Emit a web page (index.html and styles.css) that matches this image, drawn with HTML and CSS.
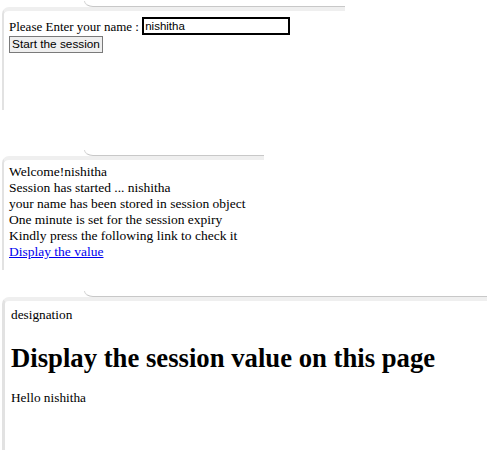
FILE: index.html
```html
<!DOCTYPE html>
<html>
<head>
<meta charset="utf-8">
<link rel="stylesheet" href="styles.css">
</head>
<body>
<div class="page">
  <div class="shot s1">
    <div class="tab"></div>
    <div class="frame f1">
      <div class="row">Please Enter your name : <input class="name" type="text" value="nishitha"></div>
      <button class="btn">Start the session</button>
    </div>
  </div>
  <div class="shot s2">
    <div class="tab"></div>
    <div class="frame f2">
      <div class="line">Welcome!nishitha</div>
      <div class="line">Session has started ... nishitha</div>
      <div class="line">your name has been stored in session object</div>
      <div class="line">One minute is set for the session expiry</div>
      <div class="line">Kindly press the following link to check it</div>
      <div class="line"><a href="#" class="link">Display the value</a></div>
    </div>
  </div>
  <div class="shot s3">
    <div class="tab"></div>
    <div class="frame f3">
      <div class="line">designation</div>
      <h1 class="title">Display the session value on this page</h1>
      <div class="line hello">Hello nishitha</div>
    </div>
  </div>
</div>
</body>
</html>
```

FILE: styles.css
```css
html, body {
  margin: 0;
  padding: 0;
  background: #fff;
}
body {
  width: 487px;
  height: 450px;
  overflow: hidden;
  font-family: "Liberation Serif", "Times New Roman", serif;
  font-size: 13px;
  color: #000;
}
.page {
  display: flex;
  flex-direction: column;
}
.shot {
  display: flex;
  flex-direction: column;
  margin-left: 2px;
}
.s1 { width: 343px; height: 109px; margin-top: 1px; }
.s2 { width: 262px; height: 120px; margin-top: 40px; }
.s3 { width: 485px; height: 159px; margin-top: 21px; }

.tab {
  height: 5px;
  margin-left: 82px;
  border-left: 1px solid #d4d4d4;
  border-bottom: 1px solid #c8c8c8;
  border-bottom-left-radius: 9px 6px;
}
.frame {
  flex: 1;
  border-left: 2px solid #e2e2e2;
  border-top: 4px solid #efefef;
  border-top-left-radius: 7px;
  background: #fff;
}
.f1 { padding: 6px 0 0 5px; }
.f2 { padding: 4px 0 0 5px; font-size: 13.5px; }
.f3 { padding: 6px 0 0 6px; border-left-width: 3px; font-size: 13.3px; }

.row {
  height: 19px;
  line-height: 19px;
  white-space: nowrap;
}
.name {
  box-sizing: border-box;
  width: 148px;
  height: 18px;
  margin: 0;
  padding: 0 1px;
  border: 2px solid #000;
  font-family: "Liberation Sans", Arial, sans-serif;
  font-size: 11.5px;
  vertical-align: top;
  outline: none;
}
.btn {
  display: block;
  box-sizing: border-box;
  width: 94px;
  height: 17px;
  margin: 0;
  padding: 0;
  border: 1px solid #7a7a7a;
  background: #efefef;
  font-family: "Liberation Sans", Arial, sans-serif;
  font-size: 11.8px;
  line-height: 15px;
  white-space: nowrap;
  color: #000;
}
.line {
  line-height: 16px;
  white-space: nowrap;
}
.link {
  color: #0000ee;
  text-decoration: underline;
}
.title {
  margin: 19px 0 0 0;
  font-size: 26.7px;
  line-height: 32px;
  font-weight: bold;
  white-space: nowrap;
}
.hello {
  margin-top: 16px;
}
```
